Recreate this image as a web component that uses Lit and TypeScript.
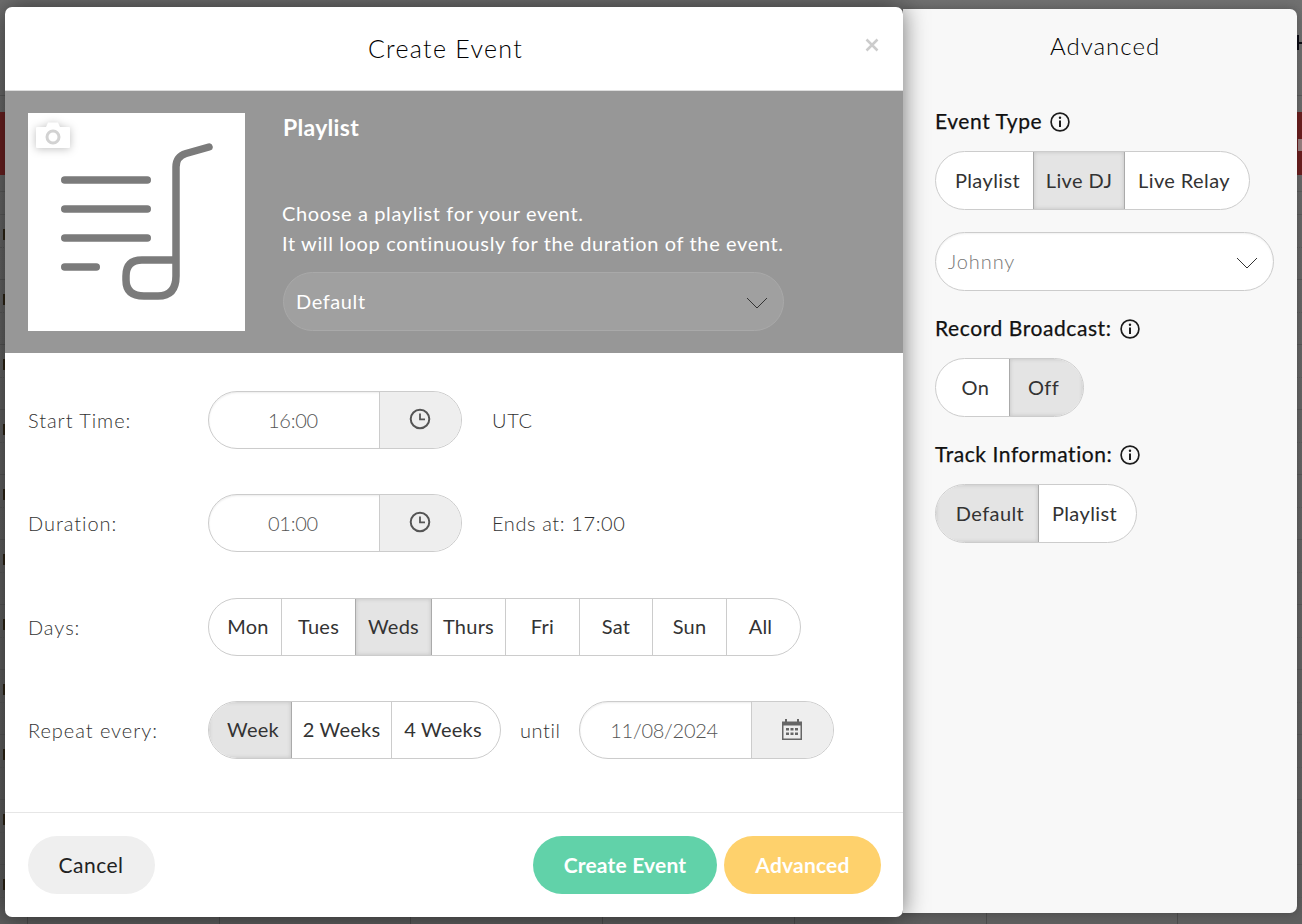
import { LitElement, html, css, svg } from "lit";
import { customElement } from "lit/decorators.js";

type Seg = { t: string; w: number; on?: boolean };

const clock = html`<svg class="ico" width="24" height="24" viewBox="0 0 24 24"><circle cx="12" cy="12" r="9.3" fill="none" stroke="#555" stroke-width="2"/><path d="M12 6.500V12.400H17" fill="none" stroke="#555" stroke-width="1.800"/></svg>`;
const calendar = html`<svg class="ico" width="22" height="22" viewBox="0 0 22 22"><path d="M1 3.500h20V22H1z" fill="#666"/><path d="M2.500 7.500h17v13h-17z" fill="#eee"/><path d="M5 1v5M17 1v5" stroke="#666" stroke-width="2"/><path d="M5 10h3v2.500H5zM9.500 10h3v2.500h-3zM14 10h3v2.500h-3zM5 14.500h3V17H5zM9.500 14.500h3V17h-3zM14 14.500h3V17h-3z" fill="#666"/></svg>`;
const info = html`<svg class="info" width="20" height="20" viewBox="0 0 20 20"><circle cx="10" cy="10" r="8.900" fill="none" stroke="#1c1c1c" stroke-width="1.700"/><path d="M10 8.500V15" stroke="#1c1c1c" stroke-width="2"/><circle cx="10" cy="5.700" r="1.200" fill="#1c1c1c"/></svg>`;
const chevron = (c: string) => html`<svg class="chev" width="22" height="12" viewBox="0 0 22 12"><path d="M1 1l10 10L21 1" fill="none" stroke="${c}" stroke-width="1"/></svg>`;

const playlistArt = svg`
  <path d="M64.750 180h82.500M64.750 209h82.500M64.750 238h82.500M64.750 267h31.500" stroke="#7b7b7b" stroke-width="7.500" stroke-linecap="round"/>
  <path d="M209 147L186 153.500Q176 156.500 176 167V276Q176 296 158 296H144Q126 296 126 280V276Q126 260 142 260H176" fill="none" stroke="#7b7b7b" stroke-width="7.500" stroke-linecap="round"/>`;

const ROWS = Array.from({ length: 11 });

@customElement("app-root")
export class AppRoot extends LitElement {
  static styles = css`
    :host { display: block; position: relative; width: 1302px; height: 924px; overflow: hidden; background: #666; font-family: "Lato", "Liberation Sans", sans-serif; color: #333; }
    * { box-sizing: border-box; }

    .backdrop { position: absolute; inset: 0; background: linear-gradient(#707070, #666 25%, #5e5e5e); }
    .b-top { height: 96px; border-bottom: 1px solid #5c5c5c; position: relative; }
    .b-top::after { content: ""; position: absolute; left: 1297px; top: 35px; width: 6px; height: 15px; border-left: 2px solid #0c0c14; border-right: 2px solid #0c0c14; background: linear-gradient(#0c0c14, #0c0c14) center / 100% 2px no-repeat; }
    .b-red { height: 63px; margin-top: 16px; background: #6c2020; position: relative; }
    .b-red::after { content: ""; position: absolute; left: 1298px; top: 27px; width: 4px; height: 12px; background: #9a8080; }
    .b-sub { height: 24px; margin-top: 16px; border-top: 1px solid #5c5c5c; border-bottom: 1px solid #5c5c5c; }
    .b-row { height: 65px; border-bottom: 1px solid #585858; position: relative; background-image: repeating-linear-gradient(90deg, #4c4c4c 0 1px, transparent 1px 191.700px); background-position: 27px 0; }
    .b-row::before { content: ""; position: absolute; left: 3px; top: 14px; width: 2px; height: 11px; background: #2e2414; }
    .b-row::after { content: ""; position: absolute; left: 0; right: 0; top: 32px; border-top: 1px dotted #5a5a5a; }

    .stage { position: relative; display: flex; align-items: flex-start; padding: 7px 0 0 5px; }
    .modal { position: relative; z-index: 2; width: 898px; height: 910px; background: #fff; border-radius: 7px; box-shadow: 0 0 24px rgba(0,0,0,.55); display: flex; flex-direction: column; overflow: hidden; }
    .m-head { height: 84px; flex: none; border-bottom: 1px solid #ddd; display: flex; align-items: center; justify-content: center; position: relative; font-size: 25px; font-weight: 300; color: #000; padding: 0 17px 2px 0; letter-spacing: 1.300px; }
    .close { position: absolute; right: 24px; top: 31px; }

    .hero { height: 262px; flex: none; background: #979797; padding: 22px 23px; display: flex; gap: 38px; color: #fff; }
    .art { width: 217px; height: 218px; background: #fff; position: relative; flex: none; }
    .art > svg.music { display: block; }
    .cam { position: absolute; left: 8px; top: 9px; filter: drop-shadow(0 1px 4px rgba(0,0,0,.25)); }
    .h-col { flex: 1; padding-top: 2px; }
    .h-title { font-size: 23px; line-height: 24px; font-weight: 700; color: #fff; letter-spacing: .3px; }
    .h-text { margin-top: 59px; margin-left: -1px; font-size: 20px; line-height: 30px; font-weight: 400; letter-spacing: .63px; }
    .select { display: flex; align-items: center; justify-content: space-between; height: 59px; border-radius: 30px; padding: 0 15px 2px 12px; font-size: 20px; font-weight: 300; letter-spacing: .9px; }
    .h-sel { width: 501px; margin-top: 14px; background: #a0a0a0; border: 1px solid #a9a9a9; color: #fff; font-weight: 400; letter-spacing: .6px; }
    .chev { margin-top: 4px; }

    .body { flex: 1; padding: 38px 23px 0; display: grid; grid-auto-rows: 58px; row-gap: 45.330px; align-content: start; }
    .row { display: flex; align-items: center; }
    .lab { width: 180px; flex: none; font-size: 20px; font-weight: 300; color: #333; letter-spacing: .95px; }
    .note { font-size: 20px; font-weight: 300; color: #333; letter-spacing: .6px; }
    .after { margin-left: 30px; }
    .until { margin: 0 18px 0 19px; }

    .field { display: flex; height: 58px; border: 1px solid #ccc; border-radius: 29px; overflow: hidden; background: #fff; box-shadow: inset 0 1px 2px rgba(0,0,0,.08); }
    .f-val { display: flex; align-items: center; justify-content: center; font-size: 20px; font-weight: 300; color: #555; letter-spacing: -.25px; padding-right: 2px; }
    .f-btn { display: flex; align-items: center; justify-content: center; background: #eee; border-left: 1px solid #ccc; padding: 0 1px 2px 0; }

    .seg { display: flex; height: 58px; border: 1px solid #ccc; border-radius: 29px; overflow: hidden; background: #fff; }
    .seg.tall { height: 59px; border-radius: 30px; }
    .seg > div { display: flex; align-items: center; justify-content: center; font-size: 20px; color: #333; border-left: 1px solid #ccc; letter-spacing: .25px; padding-bottom: 1px; }
    .seg.tall > div { padding-bottom: 2px; letter-spacing: .4px; }
    .seg > div:first-child { border-left: 0; padding-left: 6px; }
    .seg > div:last-child { padding-right: 6px; }
    .seg > div.on { background: #e4e4e4; box-shadow: inset 0 0 4px rgba(0,0,0,.15); border-left-color: #aaa; }
    .seg > div.on + div { border-left-color: #aaa; }

    .m-foot { height: 105px; flex: none; border-top: 1px solid #e6e6e6; padding: 23px 22px 0 23px; display: flex; gap: 7px; align-items: flex-start; }
    .btn { height: 58px; border-radius: 29px; display: flex; align-items: center; justify-content: center; font-size: 21px; padding-bottom: 2px; }
    .cancel { width: 127px; background: #efefef; color: #222; margin-right: auto; letter-spacing: .45px; padding-right: 1px; }
    .create { width: 184px; background: #61d2a9; color: #fff; font-weight: 700; letter-spacing: .2px; }
    .adv { width: 157px; background: #fed16c; color: #fff; font-weight: 700; letter-spacing: .2px; }

    .panel { position: relative; z-index: 1; width: 394px; height: 904px; margin-top: 2px; background: #f8f8f8; border-radius: 0 7px 7px 0; box-shadow: 0 0 10px rgba(0,0,0,.25); padding: 0 0 0 32px; }
    .p-title { height: 75px; padding: 23px 0 0 115px; font-size: 24px; line-height: 28px; font-weight: 300; color: #000; letter-spacing: 1px; }
    .p-lab { display: flex; align-items: center; gap: 8px; height: 24px; font-size: 21px; font-weight: 400; color: #111; letter-spacing: .58px; margin: 24px 0 19px; -webkit-text-stroke: .25px #111; }
    .info { margin-top: 4px; }
    .p-sel { width: 339px; height: 59px; margin-top: 22px; background: #fff; border: 1px solid #ccc; color: #777; box-shadow: inset 0 1px 2px rgba(0,0,0,.06); }
    .fit { width: max-content; }
  `;

  private seg(items: Seg[], tall = false) {
    return html`<div class="seg fit ${tall ? "tall" : ""}">${items.map(
      (s) => html`<div class=${s.on ? "on" : ""} style="width:${s.w}px">${s.t}</div>`
    )}</div>`;
  }

  private field(val: string, icon: unknown, w: number, bw: number) {
    return html`<div class="field"><div class="f-val" style="width:${w}px">${val}</div><div class="f-btn" style="width:${bw}px">${icon}</div></div>`;
  }

  render() {
    return html`
      <div class="backdrop">
        <div class="b-top"></div>
        <div class="b-red"></div>
        <div class="b-sub"></div>
        ${ROWS.map(() => html`<div class="b-row"></div>`)}
      </div>
      <div class="stage">
        <section class="modal">
          <header class="m-head">Create Event
            <svg class="close" width="14" height="14" viewBox="0 0 14 14"><path d="M1.500 1.500l11 11M12.500 1.500l-11 11" stroke="#ccc" stroke-width="2.500"/></svg>
          </header>
          <div class="hero">
            <div class="art">
              <svg class="music" width="217" height="218" viewBox="28 113 217 218">${playlistArt}</svg>
              <svg class="cam" width="34" height="27" viewBox="0 0 34 27"><path d="M1 5h9l2-4.500h10l2 4.500h9q1 0 1 1v19q0 1-1 1H1q-1 0-1-1V6q0-1 1-1z" fill="#fff"/><circle cx="17" cy="15" r="6" fill="none" stroke="#d2d2d2" stroke-width="3"/></svg>
            </div>
            <div class="h-col">
              <div class="h-title">Playlist</div>
              <div class="h-text">Choose a playlist for your event.<br />It will loop continuously for the duration of the event.</div>
              <div class="select h-sel"><span>Default</span>${chevron("#333")}</div>
            </div>
          </div>
          <div class="body">
            <div class="row"><div class="lab">Start Time:</div>${this.field("16:00", clock, 170, 82)}<div class="note after">UTC</div></div>
            <div class="row"><div class="lab">Duration:</div>${this.field("01:00", clock, 170, 82)}<div class="note after">Ends at: 17:00</div></div>
            <div class="row"><div class="lab">Days:</div>${this.seg([
              { t: "Mon", w: 72 }, { t: "Tues", w: 74 }, { t: "Weds", w: 76, on: true }, { t: "Thurs", w: 74 },
              { t: "Fri", w: 74 }, { t: "Sat", w: 73 }, { t: "Sun", w: 74 }, { t: "All", w: 74 },
            ])}</div>
            <div class="row"><div class="lab">Repeat every:</div>${this.seg([
              { t: "Week", w: 82, on: true }, { t: "2 Weeks", w: 100 }, { t: "4 Weeks", w: 109 },
            ])}<div class="note until">until</div>${this.field("11/08/2024", calendar, 171, 82)}</div>
          </div>
          <footer class="m-foot">
            <div class="btn cancel">Cancel</div>
            <div class="btn create">Create Event</div>
            <div class="btn adv">Advanced</div>
          </footer>
        </section>
        <aside class="panel">
          <div class="p-title">Advanced</div>
          <div class="p-lab">Event Type ${info}</div>
          ${this.seg([{ t: "Playlist", w: 97 }, { t: "Live DJ", w: 91, on: true }, { t: "Live Relay", w: 125 }], true)}
          <div class="select p-sel"><span>Johnny</span>${chevron("#333")}</div>
          <div class="p-lab">Record Broadcast: ${info}</div>
          ${this.seg([{ t: "On", w: 73 }, { t: "Off", w: 74, on: true }], true)}
          <div class="p-lab">Track Information: ${info}</div>
          ${this.seg([{ t: "Default", w: 102, on: true }, { t: "Playlist", w: 98 }], true)}
        </aside>
      </div>
    `;
  }
}
